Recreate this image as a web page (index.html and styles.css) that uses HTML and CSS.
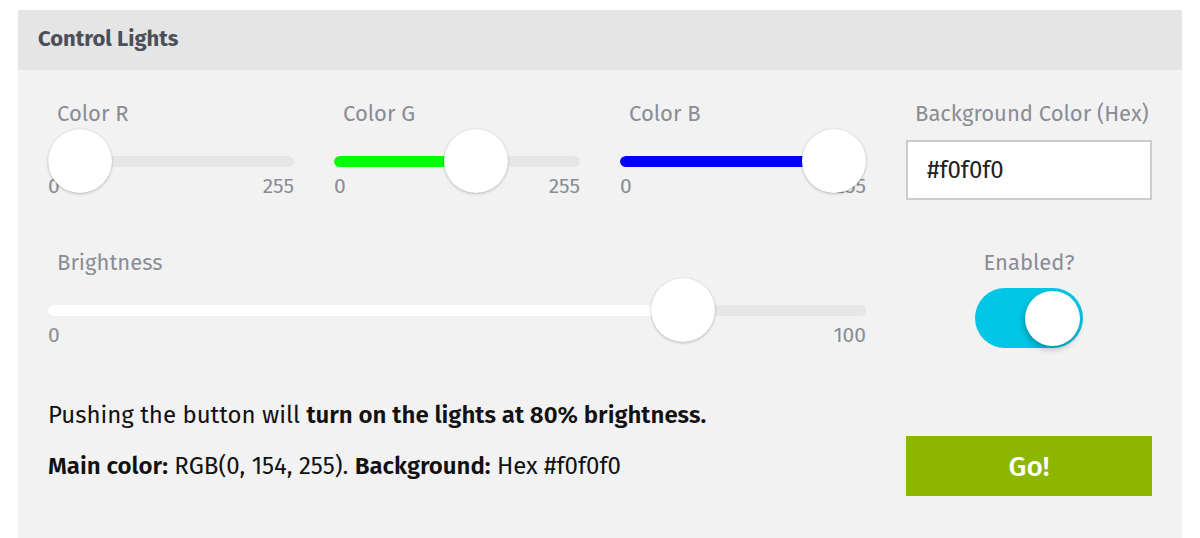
FILE: index.html
```html
<!DOCTYPE html>
<html>
<head>
<meta charset="utf-8">
<link rel="stylesheet" href="styles.css">
</head>
<body>
<div class="card">
  <div class="header">Control Lights</div>
  <div class="body">
    <div class="grid row1">
      <div class="field">
        <div class="label">Color R</div>
        <div class="slider">
          <div class="track"><div class="fill fill-r" style="width:32px"></div></div>
          <div class="thumb" style="left:0px"></div>
        </div>
        <div class="scale"><span>0</span><span>255</span></div>
      </div>
      <div class="field">
        <div class="label">Color G</div>
        <div class="slider">
          <div class="track"><div class="fill fill-g" style="width:142px"></div></div>
          <div class="thumb" style="left:110px"></div>
        </div>
        <div class="scale"><span>0</span><span>255</span></div>
      </div>
      <div class="field">
        <div class="label">Color B</div>
        <div class="slider">
          <div class="track"><div class="fill fill-b" style="width:214px"></div></div>
          <div class="thumb" style="left:182px"></div>
        </div>
        <div class="scale"><span>0</span><span>255</span></div>
      </div>
      <div class="field">
        <div class="label">Background Color (Hex)</div>
        <input class="hex" type="text" value="#f0f0f0">
      </div>
    </div>
    <div class="grid row2">
      <div class="field wide">
        <div class="label">Brightness</div>
        <div class="slider">
          <div class="track"><div class="fill fill-w" style="width:635px"></div></div>
          <div class="thumb" style="left:603px"></div>
        </div>
        <div class="scale"><span>0</span><span>100</span></div>
      </div>
      <div class="field center">
        <div class="label plain">Enabled?</div>
        <div class="toggle"><div class="knob"></div></div>
      </div>
    </div>
    <div class="footer">
      <p class="line1">Pushing the button will <b>turn on the lights at 80% brightness.</b></p>
      <div class="grid row3">
        <p class="line2 wide"><b>Main color:</b> RGB(0, 154, 255). <b>Background:</b> Hex #f0f0f0</p>
        <button class="go">Go!</button>
      </div>
    </div>
  </div>
</div>
</body>
</html>
```

FILE: styles.css
```css
* { box-sizing: border-box; }
html, body { margin: 0; padding: 0; background: #ffffff; }
body {
  font-family: "Fira Sans", "Lato", "Liberation Sans", sans-serif;
  overflow: hidden;
}
.card {
  margin: 10px 18px 0;
  width: 1164px;
  height: 528px;
  background: #f2f2f2;
}
.header {
  height: 60px;
  background: #e5e5e5;
  display: flex;
  align-items: center;
  padding-left: 20px;
  padding-bottom: 3px;
  font-size: 22px;
  font-weight: 700;
  color: #4a4f59;
}
.body {
  padding: 32px 30px 0;
}
.grid {
  display: grid;
  grid-template-columns: repeat(4, 246px);
  column-gap: 40px;
}
.wide { grid-column: span 3; }
.field { display: flex; flex-direction: column; }
.field.center { align-items: center; }
.label {
  font-size: 22px;
  line-height: 24px;
  color: #8a8d94;
  padding-left: 9px;
  margin-bottom: 20px;
  white-space: nowrap;
}
.label.plain { padding-left: 0; margin-bottom: 13px; }
.slider {
  position: relative;
  height: 30px;
  display: flex;
  align-items: center;
}
.track {
  width: 100%;
  height: 11px;
  border-radius: 6px;
  background: #e6e6e6;
  overflow: hidden;
}
.fill { height: 100%; border-radius: 6px; }
.fill-r { background: #ff0000; width: 0; }
.fill-g { background: #00ff00; }
.fill-b { background: #0000ff; }
.fill-w { background: #ffffff; }
.thumb {
  position: absolute;
  top: -17px;
  width: 64px;
  height: 64px;
  border-radius: 50%;
  background: #ffffff;
  box-shadow: 0 1px 3px rgba(0,0,0,0.22), 0 0 1px rgba(0,0,0,0.15);
}
.scale {
  display: flex;
  justify-content: space-between;
  font-size: 21px;
  line-height: 20px;
  color: #8a8d94;
}
.hex {
  width: 246px;
  height: 60px;
  margin-top: -6px;
  border: 2px solid #cdcdcd;
  background: #ffffff;
  padding: 0 0 0 19px;
  font-family: inherit;
  font-size: 24px;
  color: #222222;
  outline: none;
}
.row2 { margin-top: 51px; }
.toggle {
  position: relative;
  width: 108px;
  height: 60px;
  border-radius: 30px;
  background: #00c7e5;
}
.knob {
  position: absolute;
  right: 3px;
  top: 3px;
  width: 55px;
  height: 55px;
  border-radius: 50%;
  background: #ffffff;
  box-shadow: -1px 3px 6px rgba(0,0,0,0.28);
}
.footer { margin-top: 55px; }
.footer p {
  margin: 0;
  font-size: 24px;
  line-height: 24px;
  color: #111111;
}
.footer b { font-weight: 600; }
.line1 { margin-bottom: 9px !important; }
.row3 { align-items: center; }
.go {
  width: 246px;
  height: 60px;
  border: none;
  background: #8db600;
  color: #ffffff;
  font-family: inherit;
  font-size: 28px;
  font-weight: 500;
  padding: 0;
}
```
